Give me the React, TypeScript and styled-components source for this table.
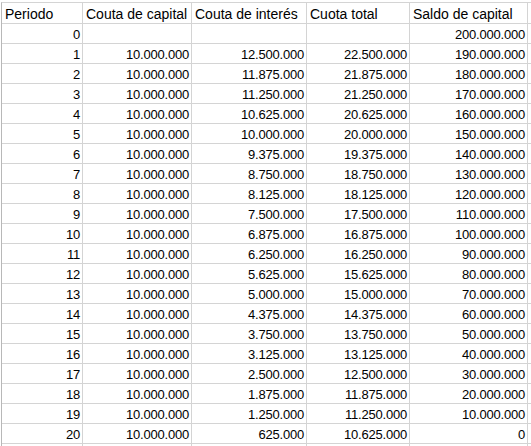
import { Fragment } from 'react';
import styled, { createGlobalStyle } from 'styled-components';

const GlobalStyle = createGlobalStyle`
  html, body {
    margin: 0;
    padding: 0;
    background: #ffffff;
  }
  body {
    font-family: "Liberation Sans", Arial, sans-serif;
    color: #000000;
  }
`;

interface Row {
  periodo: number;
  capital: number | null;
  interes: number | null;
  total: number | null;
  saldo: number;
}

const PRINCIPAL = 200000000;
const PERIODS = 20;
const RATE = 0.0625;

const buildRows = (): Row[] => {
  const rows: Row[] = [{ periodo: 0, capital: null, interes: null, total: null, saldo: PRINCIPAL }];
  const capital = PRINCIPAL / PERIODS;
  let saldo = PRINCIPAL;
  for (let p = 1; p <= PERIODS; p++) {
    const interes = saldo * RATE;
    saldo -= capital;
    rows.push({ periodo: p, capital, interes, total: capital + interes, saldo });
  }
  return rows;
};

const fmt = (n: number | null) =>
  n === null ? '' : Math.round(n).toString().replace(/\B(?=(\d{3})+(?!\d))/g, '.');

const headers = ['Periodo', 'Couta de capital', 'Couta de interés', 'Cuota total', 'Saldo de capital'];

const App = () => {
  const rows = buildRows();
  return (
    <>
      <GlobalStyle />
      <Sheet>
        {headers.map((h) => (
          <HeadCell key={h}>{h}</HeadCell>
        ))}
        <HeadCell />
        {rows.map((r) => (
          <Fragment key={r.periodo}>
            <NumCell>{r.periodo}</NumCell>
            <NumCell>{fmt(r.capital)}</NumCell>
            <NumCell>{fmt(r.interes)}</NumCell>
            <NumCell>{fmt(r.total)}</NumCell>
            <NumCell>{fmt(r.saldo)}</NumCell>
            <NumCell />
          </Fragment>
        ))}
        {Array.from({ length: 6 }).map((_, i) => (
          <NumCell key={`e${i}`} />
        ))}
      </Sheet>
    </>
  );
};

const Sheet = styled.div`
  display: grid;
  grid-template-columns: 81px 109px 115px 103px 118px 20px;
  grid-template-rows: 21px;
  grid-auto-rows: 20px;
  margin: 2px 0 0 1px;
  border-top: 1px solid #d4d4d4;
  border-left: 1px solid #b8b8b8;
  width: max-content;
`;

const Cell = styled.div`
  box-sizing: border-box;
  border-right: 1px solid #d4d4d4;
  border-bottom: 1px solid #d4d4d4;
  display: flex;
  align-items: flex-end;
  overflow: hidden;
  white-space: nowrap;
`;

const HeadCell = styled(Cell)`
  font-size: 14px;
  line-height: 16px;
  padding: 0 3px 1px 3px;
`;

const NumCell = styled(Cell)`
  justify-content: flex-end;
  font-size: 13px;
  letter-spacing: -0.2px;
  line-height: 15px;
  padding: 0 2px 1px 3px;
`;

export default App;
